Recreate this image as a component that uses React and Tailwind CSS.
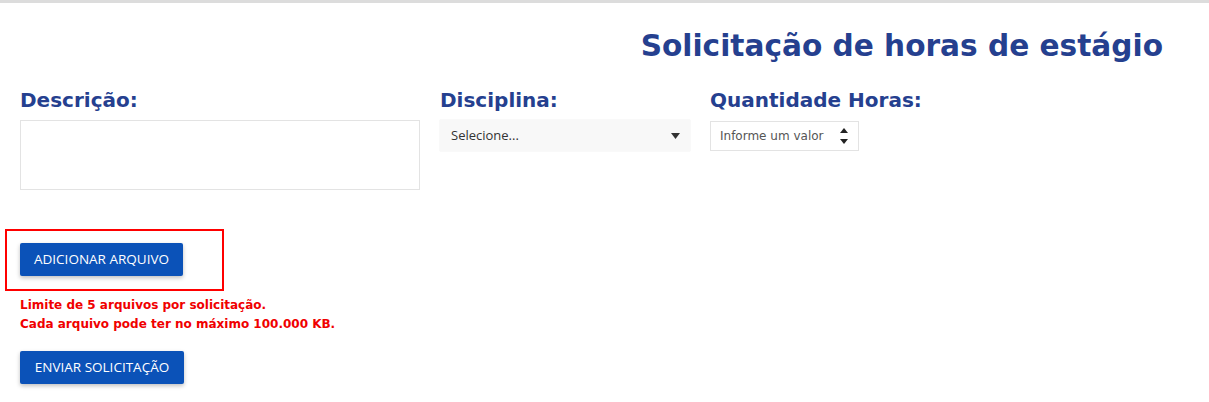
export default function App() {
  const verdana = { fontFamily: '"DejaVu Sans", Verdana, sans-serif' };
  const btnFont = { fontFamily: '"Open Sans", "Noto Sans", sans-serif' };
  return (
    <div className="w-[1209px] h-[402px] bg-white overflow-hidden">
      <div className="h-[3px] bg-[#dcdcdc]" />
      <div className="flex justify-end pr-[46px] pt-[25px]">
        <h1
          className="text-[29.6px] leading-[36px] font-bold text-[#25408f]"
          style={verdana}
        >
          Solicitação de horas de estágio
        </h1>
      </div>
      <div className="flex pl-[20px] pt-[24px]">
        <div className="w-[420px]">
          <div className="text-[20px] leading-[24px] font-bold text-[#25408f]" style={verdana}>
            Descrição:
          </div>
          <textarea className="mt-[8px] block w-[400px] h-[70px] border border-[#e3e3e3] resize-none outline-none" />
        </div>
        <div className="w-[270px]">
          <div className="text-[20px] leading-[24px] font-bold text-[#25408f]" style={verdana}>
            Disciplina:
          </div>
          <div className="mt-[8px] w-[250px] h-[31px] bg-[#f8f8f8] flex items-center justify-between pl-[11px] pr-[10px] shadow-[0_0_1px_rgba(0,0,0,0.15)]">
            <span className="text-[13px] text-[#333]" style={btnFont}>
              Selecione...
            </span>
            <svg width="9" height="6" viewBox="0 0 9 6"><path d="M0 0h9L4.5 6z" fill="#333" /></svg>
          </div>
        </div>
        <div>
          <div className="text-[20px] leading-[24px] font-bold text-[#25408f]" style={verdana}>
            Quantidade Horas:
          </div>
          <div className="mt-[9px] w-[149px] h-[30px] border border-[#e3e3e3] flex items-center pl-[9px] pr-[10px] justify-between">
            <span className="text-[12px] text-[#555]" style={verdana}>Informe um valor</span>
            <div className="flex flex-col gap-[6px]">
              <svg width="8" height="5" viewBox="0 0 8 5"><path d="M0 5h8L4 0z" fill="#222" /></svg>
              <svg width="8" height="5" viewBox="0 0 8 5"><path d="M0 0h8L4 5z" fill="#222" /></svg>
            </div>
          </div>
        </div>
      </div>
      <div className="pl-[5px] pt-[39px]">
        <div className="w-[219px] h-[62px] border-2 border-[#ff0000] pl-[13px] pt-[12px]">
          <button
            className="w-[163px] h-[33px] bg-[#0b52b8] text-white text-[13.5px] rounded-[2px] shadow-[0_2px_4px_rgba(0,0,0,0.25)]"
            style={btnFont}
          >
            ADICIONAR ARQUIVO
          </button>
        </div>
      </div>
      <div className="pl-[20px] pt-[5px] text-[12px] leading-[19px] font-bold text-[#f00000]" style={verdana}>
        <div>Limite de 5 arquivos por solicitação.</div>
        <div>Cada arquivo pode ter no máximo 100.000 KB.</div>
      </div>
      <div className="pl-[20px] pt-[17px]">
        <button
          className="w-[164px] h-[33px] bg-[#0b52b8] text-white text-[13.5px] rounded-[2px] shadow-[0_2px_4px_rgba(0,0,0,0.25)]"
          style={btnFont}
        >
          ENVIAR SOLICITAÇÃO
        </button>
      </div>
    </div>
  );
}
